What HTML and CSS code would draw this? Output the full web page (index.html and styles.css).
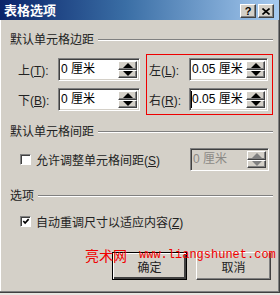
FILE: index.html
```html
<!DOCTYPE html>
<html lang="zh-CN">
<head>
<meta charset="utf-8">
<title>表格选项</title>
<link rel="stylesheet" href="styles.css">
</head>
<body>
<div class="win">
  <div class="title">
    <span class="ttext">表格选项</span>
    <span class="tbtn">?</span>
    <span class="tbtn x">
      <svg width="8" height="7" viewBox="0 0 8 7"><path d="M0.5 0.5 L7.5 6.5 M7.5 0.5 L0.5 6.5" stroke="#000" stroke-width="1.6"/></svg>
    </span>
  </div>
  <div class="body">
    <div class="gh"><span>默认单元格边距</span><span class="rule"></span></div>
    <div class="margins">
      <div class="lcol">
        <div class="field"><span class="lab">上(<u>T</u>):</span>
          <div class="spin wl"><span class="val">0 厘米</span><div class="arrows"><div><i class="up"></i></div><div><i class="dn"></i></div></div></div>
        </div>
        <div class="field"><span class="lab">下(<u>B</u>):</span>
          <div class="spin wl"><span class="val">0 厘米</span><div class="arrows"><div><i class="up"></i></div><div><i class="dn"></i></div></div></div>
        </div>
      </div>
      <div class="rcol">
        <div class="field"><span class="lab">左(<u>L</u>):</span>
          <div class="spin wr"><span class="val">0.05 厘米</span><div class="arrows"><div><i class="up"></i></div><div><i class="dn"></i></div></div></div>
        </div>
        <div class="field"><span class="lab">右(<u>R</u>):</span>
          <div class="spin wr"><span class="val caret">0.05 厘米</span><div class="arrows"><div><i class="up"></i></div><div><i class="dn"></i></div></div></div>
        </div>
      </div>
    </div>
    <div class="gh g2"><span>默认单元格间距</span><span class="rule"></span></div>
    <div class="crow spacing">
      <span class="cb"></span>
      <span class="clab">允许调整单元格间距(<u>S</u>)</span>
      <div class="spin wr dis"><span class="val">0 厘米</span><div class="arrows"><div><i class="up"></i></div><div><i class="dn"></i></div></div></div>
    </div>
    <div class="gh g3"><span>选项</span><span class="rule"></span></div>
    <div class="crow opts">
      <span class="cb"><svg width="9" height="9" viewBox="0 0 9 9"><path d="M1.5 4 L3.5 6.3 L7.5 1.8" fill="none" stroke="#000" stroke-width="1.8"/></svg></span>
      <span class="clab">自动重调尺寸以适应内容(<u>Z</u>)</span>
    </div>
    <div class="btns">
      <span class="btn def">确定</span>
      <span class="btn">取消</span>
    </div>
  </div>
  <div class="wm"><span class="wmc">亮术网</span><span class="wmu">www.liangshunet.com</span></div>
</div>
</body>
</html>
```

FILE: styles.css
```css
* { box-sizing: border-box; }
html, body { margin: 0; background: #e8e6e1; }
body {
  font-family: "Liberation Sans", "Noto Sans CJK SC", sans-serif;
  font-size: 12px;
  color: #000;
}
.win {
  position: relative;
  width: 280px;
  height: 293px;
  background: #d4d0c8;
  border-right: 1px solid #404040;
  border-bottom: 1px solid #404040;
  box-shadow: inset -1px -1px #808080, inset 1px 0 #ffffff;
  display: flex;
  flex-direction: column;
  overflow: hidden;
}
.title {
  height: 20px;
  flex: none;
  background: linear-gradient(to right, #0a246a 0%, #3a6ea5 45%, #a6caf0 100%);
  display: flex;
  align-items: center;
  padding: 0 5px 0 4px;
  color: #fff;
  font-family: "Noto Sans CJK SC", sans-serif;
  font-weight: bold;
  font-size: 13px;
}
.ttext { flex: 1; line-height: 20px; }
.tbtn {
  width: 16px;
  height: 14px;
  margin-left: 1px;
  margin-top: 2px;
  background: #d4d0c8;
  border: 1px solid;
  border-color: #ffffff #404040 #404040 #ffffff;
  box-shadow: inset -1px -1px #808080;
  display: flex;
  align-items: center;
  justify-content: center;
  color: #000;
  font: bold 11px "Liberation Sans", sans-serif;
}
.tbtn.x { margin-left: 2px; }
.body {
  flex: 1;
  display: flex;
  flex-direction: column;
  padding: 12px 6px 0 10px;
}
.gh {
  display: flex;
  align-items: center;
  height: 14px;
  line-height: 14px;
  font-family: "Noto Sans CJK SC", sans-serif;
  color: #222;
}
.rule {
  flex: 1;
  height: 2px;
  margin-left: 4px;
  margin-top: 2px;
  border-top: 1px solid #808080;
  border-bottom: 1px solid #ffffff;
}
.margins { display: flex; margin-top: 8px; }
.lcol {
  width: 136px;
  padding: 4px 0 0 8px;
  display: flex;
  flex-direction: column;
  gap: 7px;
}
.rcol {
  width: 127px;
  border: 1px solid #ee0000;
  padding: 3px 4px 3px 2px;
  display: flex;
  flex-direction: column;
  gap: 7px;
}
.field { display: flex; align-items: center; height: 23px; }
.lab { width: 40px; color: #222; }
.spin {
  height: 23px;
  display: flex;
  background: #fff;
  border: 1px solid;
  border-color: #808080 #ffffff #ffffff #808080;
  box-shadow: inset 1px 1px #404040, inset -1px -1px #d4d0c8;
  padding: 2px;
}
.spin.wl { width: 82px; }
.spin.wr { width: 79px; }
.val { flex: 1; line-height: 17px; font-size: 12px; white-space: nowrap; overflow: hidden; }
.caret { border-left: 1px solid #000; margin-left: -1px; }
.arrows { width: 19px; flex: none; display: flex; flex-direction: column; }
.arrows div {
  flex: 1;
  background: #d4d0c8;
  border: 1px solid;
  border-color: #ffffff #404040 #404040 #ffffff;
  box-shadow: inset -1px -1px #808080;
  display: flex;
  align-items: center;
  justify-content: center;
}
.up, .dn { width: 0; height: 0; border-left: 5px solid transparent; border-right: 5px solid transparent; }
.up { border-bottom: 5px solid #000; }
.dn { border-top: 5px solid #000; }
.dis { background: #d4d0c8; color: #8c8a86; }
.dis .up { border-bottom-color: #808080; }
.dis .dn { border-top-color: #808080; }
.g2 { margin-top: 9px; }
.crow { display: flex; align-items: center; }
.spacing { height: 23px; margin-top: 10px; }
.cb {
  width: 11px;
  height: 11px;
  margin-left: 10px;
  background: #fff;
  border: 1px solid;
  border-color: #808080 #ffffff #ffffff #808080;
  box-shadow: inset 1px 1px #404040;
  display: flex;
  align-items: center;
  justify-content: center;
  flex: none;
}
.cb svg { margin: 1px 0 0 1px; }
.clab { margin-left: 5px; color: #222; }
.spacing .spin { margin-left: auto; margin-right: 4px; }
.g3 { margin-top: 17px; }
.opts { height: 16px; margin-top: 11px; }
.btns {
  display: flex;
  justify-content: flex-end;
  gap: 9px;
  margin-top: 23px;
  margin-right: 2px;
}
.btn {
  width: 75px;
  height: 28px;
  display: flex;
  align-items: center;
  justify-content: center;
  background: #d4d0c8;
  border: 1px solid;
  border-color: #ffffff #404040 #404040 #ffffff;
  box-shadow: inset -1px -1px #808080;
  font-family: "Noto Sans CJK SC", sans-serif;
  color: #222;
}
.btn.def {
  border: 1px solid #000;
  box-shadow: inset 1px 1px #ffffff, inset -2px -2px #404040;
}
.wm {
  position: absolute;
  left: 85px;
  top: 246px;
  display: flex;
  align-items: center;
  color: #f00000;
  line-height: 18px;
}
.wmc { font-family: "Noto Sans CJK SC", sans-serif; font-size: 14px; }
.wmu { font-family: "Liberation Mono", monospace; font-size: 12px; margin-left: 12px; }
```
